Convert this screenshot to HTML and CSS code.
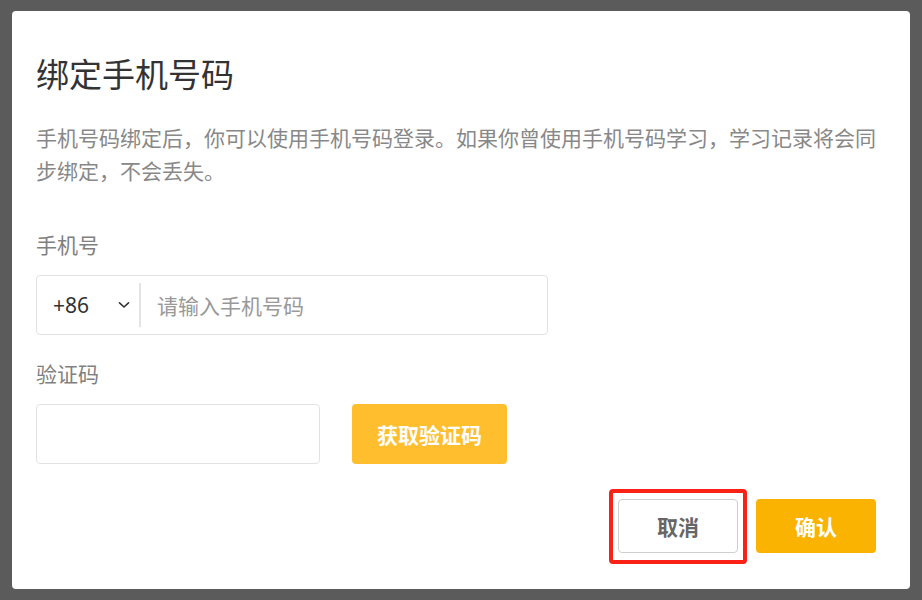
FILE: index.html
```html
<!DOCTYPE html>
<html lang="zh-CN">
<head>
    <meta charset="UTF-8">
    <meta name="viewport" content="width=device-width, initial-scale=1.0">
    <title>绑定手机号码</title>
    <link rel="stylesheet" href="styles.css">
</head>
<body>
    <div class="modal">
        <h1 class="modal-title">绑定手机号码</h1>
        <p class="modal-desc">手机号码绑定后，你可以使用手机号码登录。如果你曾使用手机号码学习，学习记录将会同步绑定，不会丢失。</p>

        <div class="field">
            <label class="field-label" for="phone">手机号</label>
            <div class="phone-input">
                <div class="area-code">
                    <span>+86</span>
                    <svg class="chevron" width="12" height="8" viewBox="0 0 12 8">
                        <path d="M1.5 1.8 L6 6 L10.5 1.8" fill="none" stroke="#333" stroke-width="1.6" stroke-linecap="round" stroke-linejoin="round"/>
                    </svg>
                </div>
                <input type="text" id="phone" placeholder="请输入手机号码">
            </div>
        </div>

        <div class="field">
            <label class="field-label" for="code">验证码</label>
            <div class="code-row">
                <input type="text" id="code" class="code-input">
                <button class="btn-code">获取验证码</button>
            </div>
        </div>

        <div class="modal-footer">
            <div class="cancel-wrap">
                <button class="btn-cancel">取消</button>
                <span class="highlight"></span>
            </div>
            <button class="btn-confirm">确认</button>
        </div>
    </div>
</body>
</html>
```

FILE: styles.css
```css
body {
    margin: 0;
    padding: 11px 0;
    background-color: #5b5b5b; /* dimmed page behind the dialog */
    font-family: "Noto Sans CJK SC", "Noto Sans", sans-serif;
}

.modal {
    width: 898px;
    margin: 0 auto;
    box-sizing: border-box;
    padding: 38px 24px 36px;
    background-color: #fff;
    border-radius: 4px;
}

.modal-title {
    margin: 0;
    font-size: 33px;
    line-height: 48px;
    font-weight: normal;
    color: #333;
}

.modal-desc {
    margin: 24px 0 0;
    font-size: 21px;
    line-height: 33px;
    color: #888;
}

.field {
    margin-top: 23px;
}

.field:first-of-type {
    margin-top: 42px;
}

.field-label {
    display: block;
    font-size: 21px;
    line-height: 30px;
    color: #808080;
    margin-bottom: 16px;
}

.phone-input {
    display: flex;
    align-items: center;
    width: 512px;
    height: 60px;
    box-sizing: border-box;
    border: 1px solid #e2e2e2;
    border-radius: 4px;
}

.area-code {
    display: flex;
    align-items: center;
    justify-content: space-between;
    width: 104px;
    height: 44px;
    box-sizing: border-box;
    padding: 0 9px 0 16px;
    border-right: 2px solid #e4e4e4;
    font-family: "Noto Sans", sans-serif;
    font-size: 21px;
    color: #333;
}

.phone-input input {
    flex: 1;
    height: 100%;
    border: none;
    outline: none;
    padding: 0 16px;
    font-family: inherit;
    font-size: 21px;
    color: #333;
    background: transparent;
}

input::placeholder {
    color: #999;
}

.code-row {
    display: flex;
    gap: 32px;
}

.code-input {
    width: 284px;
    height: 60px;
    box-sizing: border-box;
    border: 1px solid #e2e2e2;
    border-radius: 4px;
    outline: none;
    padding: 0 16px;
    font-family: inherit;
    font-size: 21px;
}

button {
    font-family: inherit;
    font-size: 21px;
    font-weight: bold;
    border-radius: 4px;
    cursor: pointer;
}

.btn-code {
    width: 155px;
    height: 60px;
    border: none;
    background-color: #febe2d; /* light amber */
    color: #fff;
}

.modal-footer {
    display: flex;
    justify-content: flex-end;
    gap: 18px;
    margin-top: 35px;
    padding-right: 10px;
}

.cancel-wrap {
    position: relative;
}

.btn-cancel {
    display: block;
    width: 120px;
    height: 54px;
    border: 1px solid #cfcfcf;
    background-color: #fff;
    color: #666;
}

/* red annotation frame around the cancel button */
.highlight {
    position: absolute;
    top: -10px;
    bottom: -11px;
    left: -9px;
    right: -9px;
    border: 4px solid #fa2116;
    border-radius: 4px;
    pointer-events: none;
}

.btn-confirm {
    width: 120px;
    height: 54px;
    border: none;
    background-color: #fab300;
    color: #fff;
}
```
